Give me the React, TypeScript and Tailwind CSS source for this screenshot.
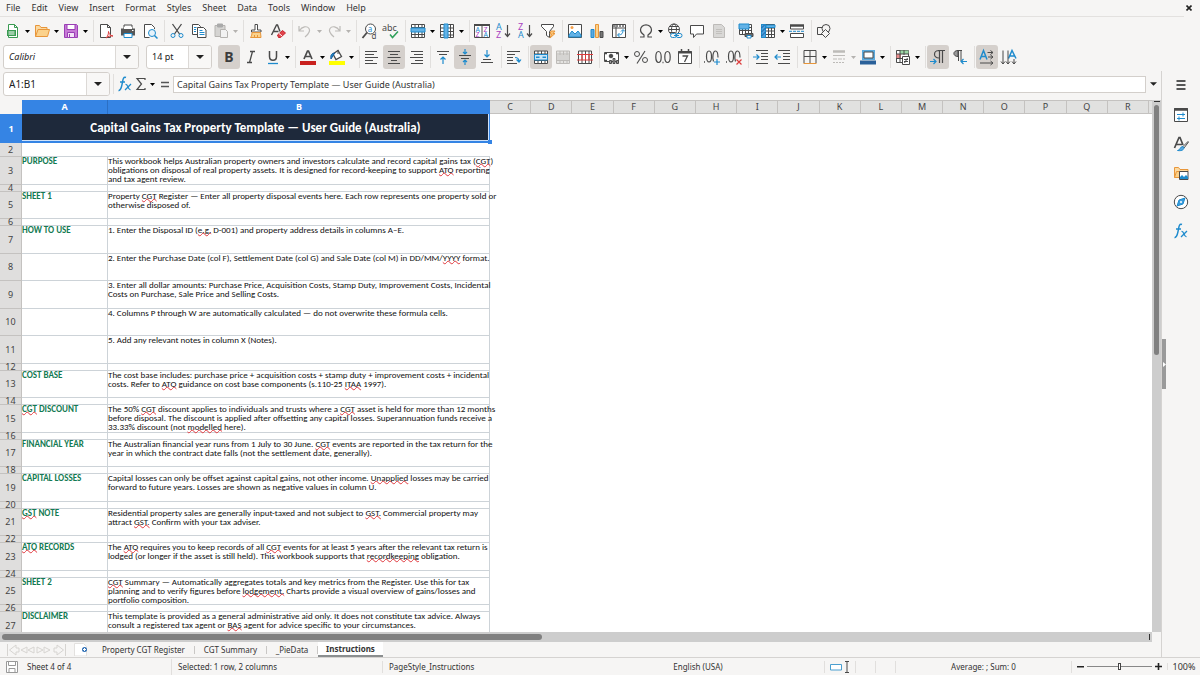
import React from 'react';

const ink = '#4a4a4a';
const blue = '#1e8bcd';

// Toolbar glyphs, all drawn on a 16x16 grid
const icons: Record<string, React.ReactNode> = {
    new: (
        <>
            <path d="M3.5 1.5h6l3 3v10h-9z" fill="#fff" stroke="#3a9b52" />
            <path d="M9.5 1.5v3h3" stroke="#3a9b52" />
            <path d="M2 7h9v6H2z" fill="#3a9b52" stroke="none" />
            <path d="M3.5 9h6M3.5 11h6" stroke="#fff" />
        </>
    ),
    open: (
        <>
            <path d="M1.5 13.5v-11h4l1.5 2h6v2" fill="#fbd9a0" stroke="#e8963a" />
            <path d="M1.5 13.5l2.5-7h11.5l-2 7z" fill="#fbd28c" stroke="#e8963a" />
        </>
    ),
    save: (
        <>
            <path d="M1.5 1.5h12l1 1v12h-13z" fill="#c77ad6" stroke="#9a3fb5" />
            <path d="M4 1.5h8v5H4z" fill="#fff" stroke="#9a3fb5" />
            <path d="M4.5 9.5h7v5h-7z" fill="#f3e3f7" stroke="#9a3fb5" />
            <path d="M6.5 11v3" stroke="#9a3fb5" />
        </>
    ),
    pdf: (
        <>
            <path d="M2.5 1.5h7l3 3v10h-10z" fill="#fff" />
            <path d="M9.5 1.5v3h3" />
            <path d="M8 15c2-2 2.500-4 2.500-6.500.5 2.500 1.500 4 4.500 4.500-3-.5-5 .5-7 2z" stroke="#dc3b3b" fill="#fff" />
        </>
    ),
    print: (
        <>
            <path d="M4 2h8v4H4z" fill="#fff" />
            <path d="M1 5.500h14v7H1z" fill="#565656" stroke="none" />
            <path d="M4 4h8v2H4z" fill="#fff" stroke="none" />
            <path d="M4 10.500h8v4H4z" fill="#fff" stroke={blue} />
            <path d="M12 7.500h1.500" stroke="#fff" />
        </>
    ),
    preview: (
        <>
            <path d="M12.500 6V4.500l-3-3h-7v13h5" fill="#fff" />
            <circle cx="10" cy="10" r="3.500" fill="#e7f3fb" stroke={blue} />
            <path d="M12.500 12.500l3 3" stroke={blue} strokeWidth="1.500" />
        </>
    ),
    cut: (
        <>
            <path d="M3.500 1l7 10M12.500 1l-7 10" strokeWidth="1.300" />
            <circle cx="4" cy="12.500" r="2" stroke={blue} />
            <circle cx="12" cy="12.500" r="2" stroke={blue} />
        </>
    ),
    copy: (
        <>
            <path d="M1.500 1.500h6l2 2v8h-8z" fill="#fff" />
            <path d="M6.500 4.500h6l2.500 2.500v7.500H6.500z" fill="#fff" />
            <path d="M3 4.500h2.500M3 6.500h2M3 8.500h2M8.500 7.500h3M8.500 9.500h5M8.500 11.500h5" stroke={blue} />
        </>
    ),
    paste: (
        <>
            <path d="M2 2.500h10v11H2z" fill="#d5d4d2" stroke="#b5b3b0" />
            <path d="M4.500 1h5v3h-5z" fill="#aaa" stroke="#aaa" />
            <path d="M7.500 6.500h5l2 2v6h-7z" fill="#f2f2f2" stroke="#b5b3b0" />
        </>
    ),
    clone: (
        <>
            <path d="M7 1.500h2.500v5.500H13v2H3.500V7H7z" fill="#fff" />
            <path d="M4 9.500h8.500l.5 5H2.500c1-1.500 1.500-3 1.500-5z" fill="#fbd28c" stroke="#e8963a" />
            <path d="M6.500 12v2.500M9.500 12v2.500" stroke="#e8963a" />
        </>
    ),
    clear: (
        <>
            <path d="M1.500 12L6.500 2h1l2.500 6.500M3.500 8.500h5" strokeWidth="1.400" />
            <path d="M7.500 12l5-4.500 3 2.500-5 4.500H8.500z" fill="#e0434b" stroke="#c9252d" />
            <path d="M9 10.500l3 2.500" stroke="#fff" />
        </>
    ),
    undo: <path d="M2 3v5h5M2.500 7.500C5 3.500 10 2.500 12 5.500s-1 6-4 8.500" stroke="#bdbbb8" strokeWidth="1.200" />,
    redo: <path d="M14 3v5H9M13.500 7.500C11 3.500 6 2.500 4 5.500s1 6 4 8.500" stroke="#bdbbb8" strokeWidth="1.200" />,
    find: (
        <>
            <circle cx="9.500" cy="6" r="5" fill="#fff" />
            <path d="M6 9.500L1.500 15" strokeWidth="1.800" />
            <text x="6.800" y="8.500" fontSize="8" fill={blue} stroke="none">a</text>
            <text x="10.500" y="15.500" fontSize="8" fill={ink} stroke="none">d</text>
        </>
    ),
    spell: (
        <>
            <text x="-1" y="8" fontSize="9" fill={ink} stroke="none">abc</text>
            <path d="M7 11.500l2.500 3 5.500-6" stroke="#2fa05a" strokeWidth="1.500" />
        </>
    ),
    row: (
        <>
            <path d="M1.500 1.500h13v13h-13zM1.500 4.500h13M1.500 11.500h13M5 1v14M8.500 1v14M12 1v14" fill="#fff" />
            <path d="M1 5h14v4H1z" fill="#63b2e6" stroke={blue} />
        </>
    ),
    column: (
        <>
            <path d="M1.500 1.500h13v13h-13zM1 5h14M1 8.500h14M1 12h14M11.500 1v14" fill="#fff" />
            <path d="M5 1h4v14H5z" fill="#63b2e6" stroke={blue} />
        </>
    ),
    sort: (
        <>
            <path d="M.5 1.500h15v13H.5zM8 2v13" fill="#fff" />
            <path d="M0 1h16v2H0z" fill={ink} stroke="none" />
            <text x="1.500" y="8.500" fontSize="7" fill={blue} stroke="none">A</text>
            <text x="1.500" y="14" fontSize="7" fill="#a93fc0" stroke="none">Z</text>
            <text x="9.500" y="8.500" fontSize="7" fill="#a93fc0" stroke="none">Z</text>
            <text x="9.500" y="14" fontSize="7" fill={blue} stroke="none">A</text>
        </>
    ),
    sortAsc: (
        <>
            <text x="0" y="7" fontSize="9" fill={blue} stroke="none">A</text>
            <text x="0" y="15" fontSize="9" fill="#a93fc0" stroke="none">Z</text>
            <path d="M11.500 2v11M9 10.500l2.500 3 2.500-3" strokeWidth="1.200" />
        </>
    ),
    sortDesc: (
        <>
            <text x="0" y="7" fontSize="9" fill="#a93fc0" stroke="none">Z</text>
            <text x="0" y="15" fontSize="9" fill={blue} stroke="none">A</text>
            <path d="M11.500 2v11M9 10.500l2.500 3 2.500-3" strokeWidth="1.200" />
        </>
    ),
    filter: (
        <>
            <path d="M1.500 1.500h12v2l-4 5v6l-3-2v-4l-5-5z" fill="#fff" />
            <path d="M11 8h4l-2 2.500h2L10 15l1.500-4H10z" fill="#fbc477" stroke="#e8963a" />
        </>
    ),
    image: (
        <>
            <path d="M1.500 1.500h13v13h-13z" fill="#fff" />
            <path d="M2 14v-2l3-4 3 3 3-3 3 4v2z" fill="#63b2e6" stroke={blue} />
            <circle cx="5" cy="4.500" r="1.500" fill="#f6a04b" stroke="none" />
        </>
    ),
    chart: (
        <>
            <path d="M2 6.500h3v8H2z" fill="#5da9e0" stroke={blue} />
            <path d="M6.500 1.500h3v13h-3z" fill="#fbd28c" stroke="#e8963a" />
            <path d="M11 8.500h3v6h-3z" fill="#777" />
        </>
    ),
    pivot: (
        <>
            <path d="M1.500 1.500h13v13h-13zM5 1v14M1 5h14" fill="#fff" />
            <path d="M2 3h12" strokeWidth="2" stroke="#8a8a8a" strokeDasharray="2 1" />
            <path d="M7 12c4 0 5-2 5-5M10 8.500L12 6.500l2 2M8.500 10L6.500 12l2 2" stroke={blue} />
        </>
    ),
    omega: <path d="M2 14h4v-2C3.500 10.500 2.500 9 2.500 7c0-3 2.500-5.200 5.500-5.200S13.500 4 13.500 7c0 2-1 3.500-3.500 5v2h4" strokeWidth="1.200" />,
    link: (
        <>
            <circle cx="7" cy="6.500" r="5.500" fill="#fff" />
            <ellipse cx="7" cy="6.500" rx="2.500" ry="5.500" />
            <path d="M1.500 6.500h11M2.500 3.500h9M2.500 9.500h6" />
            <rect x="3.500" y="10.500" width="6" height="4" rx="2" fill="#f6f5f4" stroke={blue} />
            <rect x="9" y="10.500" width="6" height="4" rx="2" stroke={blue} />
            <path d="M7 12.500h5" stroke={blue} />
        </>
    ),
    comment: <path d="M1.500 2.500h13v8.500H7.500l-3 3.500V11h-3z" fill="#fff" />,
    header: (
        <>
            <path d="M2.500 1.500h8l3 3v10h-11z" fill="#d9d8d6" stroke="#bdbbb8" />
            <path d="M5 6.500h6M5 8.500h6M5 10.500h6" stroke="#c2c0bd" />
        </>
    ),
    printArea: (
        <>
            <path d="M1.500 1.500h12v10h-12zM1 4.500h13M1 7.500h13M4.500 1v11M7.500 1v11M10.500 1v11" fill="#fff" />
            <path d="M1 1h10v5H1z" fill="#63b2e6" stroke={blue} />
            <path d="M7 10.500h8v3H7z" fill="#666" />
            <path d="M9 12.500h4v2.500H9z" fill="#fff" stroke={blue} />
        </>
    ),
    freeze: (
        <>
            <path d="M1.500 1.500h13v13h-13zM1 5h14M1 8h14M1 11.500h14M8.500 1v14M11.500 1v14" fill="#fff" />
            <path d="M1.500 1.500h4v13h-4z" fill="#4c9fdc" stroke={blue} />
            <path d="M6 2h9v2.500H6z" fill="#63b2e6" stroke={blue} />
            <path d="M1.500 5l3-3M1.500 9l4-4M1.500 13l4-4" stroke="#1a5f9e" />
        </>
    ),
    split: (
        <>
            <path d="M1.500 2v4h13V2M1.500 14.500v-4h13v4z" fill="#fff" />
            <path d="M1 2.500h14" strokeWidth="2.500" />
            <path d="M0 8.300h16" stroke={blue} strokeDasharray="3 1" />
        </>
    ),
    shapes: (
        <>
            <path d="M1.500 4.500h7v7h-7z" />
            <circle cx="10" cy="5.500" r="4" fill="#f6f5f4" />
            <path d="M9.500 6.500l4 4-4 4-4-4z" fill="#f6f5f4" />
        </>
    ),
    italic: <path d="M7 2.500h5M4 13.500h5M9.500 2.500l-3 11" strokeWidth="1.300" />,
    underline: (
        <>
            <path d="M4.500 2v5.500c0 5 7 5 7 0V2" strokeWidth="1.500" />
            <path d="M3 14.500h10" stroke={blue} strokeWidth="1.300" />
        </>
    ),
    fontColor: (
        <>
            <path d="M4 10L7.500 2h1L12 10M5.200 7.500h5.600" strokeWidth="1.700" />
            <path d="M0 12h16v4H0z" fill="#c9211e" stroke="none" />
        </>
    ),
    highlight: (
        <>
            <path d="M4 5l5-3.500 3.500 6-5.500 3z" fill="#fff" strokeWidth="1.300" />
            <path d="M9 1v4" />
            <path d="M2 10c-1-4 1-6 4-6-1.500 1.500-2 3-4 6z" fill={blue} stroke="#1a5f9e" />
            <path d="M0 12h16v4H0z" fill="#ffff00" stroke="none" />
        </>
    ),
    left: <path d="M1 2.500h12M1 5.500h9M1 8.500h13M1 11.500h8M1 14.500h12" />,
    center: <path d="M2 2.500h12M4 5.500h8M1.500 8.500h13M5 11.500h6M2 14.500h12" />,
    right: <path d="M3 2.500h12M6 5.500h9M2 8.500h13M7 11.500h8M3 14.500h12" />,
    top: (
        <>
            <path d="M2 2.500h12M4 5.500h8" />
            <path d="M8 15V8M5.500 10.500L8 8l2.500 2.500" stroke={blue} strokeWidth="1.200" />
        </>
    ),
    middle: (
        <>
            <path d="M2 6.500h12M4 9.500h8" />
            <path d="M8 0v5M6 3l2 2 2-2M8 16v-5M6 13l2-2 2 2" stroke={blue} strokeWidth="1.200" />
        </>
    ),
    bottom: (
        <>
            <path d="M2 13.500h12M4 10.500h8" />
            <path d="M8 1v7M5.500 5.500L8 8l2.500-2.500" stroke={blue} strokeWidth="1.200" />
        </>
    ),
    wrap: (
        <>
            <path d="M1 2.500h13M1 5.500h8M1 8.500h6M1 11.500h6M1 14.500h10" />
            <path d="M9 8.500c3 0 4 1.500 4 4M10.500 10.500l2.500 2.500 2-2.500" stroke={blue} strokeWidth="1.200" />
        </>
    ),
    merge: (
        <>
            <path d="M1.500 2h13v12.500h-13zM1 5h14M1 11.500h14M5 2v13M8.500 2v13M12 2v13" fill="#fff" />
            <path d="M1.500 5.500h13v5.500h-13z" fill="#cde6f7" stroke={blue} />
            <path d="M3 8.300h3.500M9.500 8.300H13" stroke={blue} strokeWidth="1.500" />
        </>
    ),
    unmerge: (
        <>
            <path d="M1.500 2h13v12.500h-13zM1 5h14M1 11.500h14M5 2v13M8.500 2v13M12 2v13" fill="#e4e3e1" stroke="#bdbbb8" />
            <path d="M2 6h12v5H2z" fill="#d5d4d2" stroke="none" />
        </>
    ),
    split2: (
        <>
            <path d="M1.500 2h13v12.500h-13zM5 2v13M8.500 2v13M12 2v13" fill="#fff" />
            <path d="M0 5.500h16M0 11h16M5 5.500V11M8.500 5.500V11M12 5.500V11" stroke="#dc3b3b" />
        </>
    ),
    currency: (
        <>
            <path d="M.5 3.500h14v9H.5z" fill="#fff" />
            <circle cx="7" cy="7" r="1.800" fill={ink} />
            <path d="M1 4.500h2M12 4.500h2M1 11.500h2" strokeWidth="1.500" />
            <path d="M5.500 11.500h2v3h-2zM9 9.500h2v5H9zM12.500 11.500h2v3h-2z" fill="#999" />
        </>
    ),
    percent: (
        <>
            <circle cx="4" cy="5" r="2.500" />
            <circle cx="12" cy="11" r="2.500" />
            <path d="M12 2L4 14.500" strokeWidth="1.100" />
        </>
    ),
    number: (
        <>
            <ellipse cx="3.500" cy="8" rx="2.700" ry="5.500" strokeWidth="1.200" />
            <ellipse cx="12.500" cy="8" rx="2.700" ry="5.500" strokeWidth="1.200" />
            <path d="M7.500 13.500h1" strokeWidth="1.500" />
        </>
    ),
    date: (
        <>
            <path d="M1.500 2.500h13v12h-13z" fill="#fff" />
            <path d="M1 3.500h14" strokeWidth="2" />
            <path d="M4.500 0v3M11.500 0v3" strokeWidth="1.500" />
            <path d="M5.500 7h5l-3 6" strokeWidth="1.300" />
        </>
    ),
    addDecimal: (
        <>
            <path d="M0 13h1" strokeWidth="1.500" />
            <ellipse cx="5" cy="7.500" rx="2.500" ry="5.500" strokeWidth="1.200" />
            <path d="M9.500 12.500C8 9 9 2 11.500 2S14 6 14 8.500" strokeWidth="1.200" />
            <path d="M13 10v6M10 13h6" stroke={blue} strokeWidth="1.200" />
        </>
    ),
    delDecimal: (
        <>
            <path d="M0 13h1" strokeWidth="1.500" />
            <ellipse cx="5" cy="7.500" rx="2.500" ry="5.500" strokeWidth="1.200" />
            <path d="M9.500 12.500C8 9 9 2 11.500 2S14 6 14 8.500" strokeWidth="1.200" />
            <path d="M10.500 10.500l5 5M15.500 10.500l-5 5" stroke="#dc3b3b" strokeWidth="1.200" />
        </>
    ),
    indent: (
        <>
            <path d="M3 1.500h12M8 4.500h7M8 7.500h7M8 10.500h7M3 14.500h12" />
            <path d="M0 8h6M3.500 5.500L6 8l-2.500 2.500" stroke={blue} strokeWidth="1.200" />
        </>
    ),
    outdent: (
        <>
            <path d="M3 1.500h12M8 4.500h7M8 7.500h7M8 10.500h7M3 14.500h12" />
            <path d="M0 8h6M2.500 5.500L0 8l2.500 2.500" stroke={blue} strokeWidth="1.200" />
        </>
    ),
    borders: (
        <>
            <path d="M2 14V1.500h12V14M2 7.500h12M8 1.500v13" />
            <path d="M1.500 14.500h13" stroke="#e8963a" />
        </>
    ),
    borderStyle: (
        <>
            <path d="M2 2.500h12" stroke="#bdbbb8" strokeWidth="2.500" />
            <path d="M2 6.500h12" stroke="#bdbbb8" />
            <path d="M2 10h12" stroke="#bdbbb8" strokeDasharray="4 1" />
            <path d="M2 13.500h12" stroke="#bdbbb8" strokeDasharray="2 1" />
        </>
    ),
    borderColor: (
        <>
            <path d="M3 2h11v8H3z" fill="#fff" stroke="#5aa9dc" strokeWidth="2" />
            <path d="M4 3h9v6H4z" />
            <path d="M0 11.500h16v4H0z" fill="#2a6099" stroke="none" />
        </>
    ),
    conditional: (
        <>
            <path d="M1.500 1.500h12v12h-12z" fill="#fff" />
            <path d="M5 1.500h8.500V5H5z" fill="#9bd7a5" stroke="none" />
            <path d="M1.500 5H6v5H1.500z" fill="#e98b8b" stroke="none" />
            <path d="M1 5h13M1 9.500h6M5 1v13M9 1v5" />
            <path d="M7.500 7.500h7v8h-7z" fill="#fff" />
            <path d="M9 10.500h4M9 12.500h4M12.500 9l-3 5" />
        </>
    ),
    ltr: (
        <>
            <path d="M8 1.500h7M9.500 1.500V14M12.500 1.500V14M9 9C3 9 3 1.500 9 1.500" strokeWidth="1.200" />
            <path d="M0 12.500h6M3.500 10L6 12.500 3.500 15" stroke={blue} strokeWidth="1.200" />
        </>
    ),
    rtl: (
        <>
            <path d="M5 1.500h5M6.500 1.500V12M9 1.500V12" />
            <path d="M6 7.500C.5 7.500.5 1.500 6 1.500z" fill="#999" />
            <path d="M9 12.500h6M11.500 10L9 12.500l2.500 2.500" stroke={blue} strokeWidth="1.200" />
        </>
    ),
    textHorizontal: (
        <>
            <path d="M1 10.500L4.500 1.500 8 10.500M2.500 7.500h4" stroke={blue} strokeWidth="1.500" />
            <path d="M8.500 3.500h5.500M11.500 1.500l2.500 2-2.500 2M9 8h5M11.500 6l2.500 2-2.500 2M1 14h13M11.500 12l2.500 2-2.500 2" />
        </>
    ),
    textVertical: (
        <>
            <path d="M7.500 9.500L11 1.500l4 8M9 7h4.500" stroke={blue} strokeWidth="1.500" />
            <path d="M2 1.500V15M0 12.500L2 15l2-2.500M7 1.500V15M5 12.500L7 15l2-2.500M13 10v5M11 12.500l2 2.500 2-2.500" />
        </>
    ),
    menu: <path d="M3.500 4h9M3.500 8h9M3.500 12h9" stroke="#222" strokeWidth="1.400" />,
    properties: (
        <>
            <path d="M1.500 1.500h13v13h-13z" fill="#fff" />
            <path d="M1 2.500h14" strokeWidth="2.500" />
            <path d="M4 7.500h8M4 11.500h8M10 5.500v4M6 9.500v4" stroke={blue} />
        </>
    ),
    styles: (
        <>
            <path d="M1.500 12L6 1.500h1L10 9M3 8.500h6" strokeWidth="1.700" />
            <path d="M15 5.500l-5 5 1 1.500 4.500-6z" fill="#fff" />
            <path d="M4.500 14.500c3 0 2-4 5.500-4 2 1 1 5-5.500 4z" fill="#5da9e0" stroke={blue} />
        </>
    ),
    gallery: (
        <>
            <path d="M1.500 12.500v-10h4l1.500 2h8v2" fill="#fbd9a0" stroke="#e8963a" />
            <path d="M1.500 12.500l2-6h11v6z" fill="#fbd28c" stroke="#e8963a" />
            <path d="M6.500 6.500h8.500v8H6.500z" fill="#fff" />
            <path d="M7 14v-2l2-2 2 2 2-2 2 2v2z" fill={blue} stroke="none" />
        </>
    ),
    navigator: (
        <>
            <circle cx="8" cy="8" r="6.700" fill="#fff" />
            <path d="M12 4l-2 6-6 2 2-6z" fill="#3c9ddd" stroke={blue} />
            <circle cx="8" cy="8" r="1" fill="#fff" stroke="none" />
        </>
    ),
    functions: (
        <>
            <path d="M9 1.500C6.500.5 6 3 5.500 6S4 15 1.500 14.500M3 6h5" stroke={blue} strokeWidth="1.500" />
            <path d="M8.500 8.500c2.500-1 2.500 6 5 5M14 8l-6 6" stroke={blue} strokeWidth="1.300" />
        </>
    ),
    sum: <path d="M12 4V2.500H4L8.500 8 4 13.500h8V12" strokeWidth="1.200" />,
    equals: <path d="M4 6.500h8M4 10.500h8" stroke="#555" strokeWidth="1.600" />,
    disk: (
        <>
            <path d="M2.500 2.500h11v11h-11z" fill="#fff" stroke="#999" />
            <path d="M4.500 2.500h7v4h-7zM5 9.500h6v4H5z" stroke="#999" />
        </>
    ),
};

function Icon({ name }: { name: string }) {
    return (
        <svg className="size-4 shrink-0 overflow-visible font-['Noto_Sans',sans-serif]" viewBox="0 0 16 16" fill="none" stroke={ink} aria-hidden="true">
            {icons[name]}
        </svg>
    );
}

function Caret({ className = '' }: { className?: string }) {
    return (
        <svg className={className} width="5" height="3" viewBox="0 0 5 3" fill="currentColor" aria-hidden="true">
            <path d="M0 0h5L2.500 3z" />
        </svg>
    );
}

type Tool = { icon: string; label: string; on?: boolean; menu?: boolean; dim?: boolean };

const standardBar: Tool[][] = [
    [
        { icon: 'new', label: 'New', menu: true },
        { icon: 'open', label: 'Open', menu: true },
        { icon: 'save', label: 'Save', menu: true },
    ],
    [
        { icon: 'pdf', label: 'Export as PDF' },
        { icon: 'print', label: 'Print' },
        { icon: 'preview', label: 'Print Preview' },
    ],
    [
        { icon: 'cut', label: 'Cut' },
        { icon: 'copy', label: 'Copy' },
        { icon: 'paste', label: 'Paste', menu: true, dim: true },
    ],
    [
        { icon: 'clone', label: 'Clone Formatting' },
        { icon: 'clear', label: 'Clear Formatting' },
    ],
    [
        { icon: 'undo', label: 'Undo', menu: true, dim: true },
        { icon: 'redo', label: 'Redo', menu: true, dim: true },
    ],
    [
        { icon: 'find', label: 'Find and Replace' },
        { icon: 'spell', label: 'Spelling' },
    ],
    [
        { icon: 'row', label: 'Row', menu: true },
        { icon: 'column', label: 'Column', menu: true },
    ],
    [
        { icon: 'sort', label: 'Sort' },
        { icon: 'sortAsc', label: 'Sort Ascending' },
        { icon: 'sortDesc', label: 'Sort Descending' },
        { icon: 'filter', label: 'AutoFilter' },
    ],
    [
        { icon: 'image', label: 'Insert Image' },
        { icon: 'chart', label: 'Insert Chart' },
        { icon: 'pivot', label: 'Insert Pivot Table' },
    ],
    [
        { icon: 'omega', label: 'Special Character', menu: true },
        { icon: 'link', label: 'Insert Hyperlink' },
        { icon: 'comment', label: 'Insert Comment' },
        { icon: 'header', label: 'Headers and Footers', dim: true },
    ],
    [
        { icon: 'printArea', label: 'Define Print Area' },
        { icon: 'freeze', label: 'Freeze Rows and Columns', menu: true },
        { icon: 'split', label: 'Split Window' },
    ],
    [{ icon: 'shapes', label: 'Show Draw Functions' }],
];

const formatBar: Tool[][] = [
    [
        { icon: 'bold', label: 'Bold', on: true },
        { icon: 'italic', label: 'Italic' },
        { icon: 'underline', label: 'Underline', menu: true },
    ],
    [
        { icon: 'fontColor', label: 'Font Color', menu: true },
        { icon: 'highlight', label: 'Background Color', menu: true },
    ],
    [
        { icon: 'left', label: 'Align Left' },
        { icon: 'center', label: 'Center Horizontally', on: true },
        { icon: 'right', label: 'Align Right' },
    ],
    [
        { icon: 'top', label: 'Align Top' },
        { icon: 'middle', label: 'Center Vertically', on: true },
        { icon: 'bottom', label: 'Align Bottom' },
    ],
    [{ icon: 'wrap', label: 'Wrap Text' }],
    [
        { icon: 'merge', label: 'Merge and Center', on: true },
        { icon: 'unmerge', label: 'Merge Cells', dim: true },
        { icon: 'split2', label: 'Unmerge Cells' },
    ],
    [
        { icon: 'currency', label: 'Format as Currency', menu: true },
        { icon: 'percent', label: 'Format as Percent' },
        { icon: 'number', label: 'Format as Number' },
        { icon: 'date', label: 'Format as Date' },
    ],
    [
        { icon: 'addDecimal', label: 'Add Decimal Place' },
        { icon: 'delDecimal', label: 'Delete Decimal Place' },
    ],
    [
        { icon: 'indent', label: 'Increase Indent' },
        { icon: 'outdent', label: 'Decrease Indent' },
    ],
    [
        { icon: 'borders', label: 'Borders', menu: true },
        { icon: 'borderStyle', label: 'Border Style', menu: true, dim: true },
        { icon: 'borderColor', label: 'Border Color', menu: true },
    ],
    [{ icon: 'conditional', label: 'Conditional Formatting', menu: true }],
    [
        { icon: 'ltr', label: 'Left-To-Right', on: true },
        { icon: 'rtl', label: 'Right-To-Left' },
    ],
    [
        { icon: 'textHorizontal', label: 'Text direction from left to right', on: true },
        { icon: 'textVertical', label: 'Text direction from top to bottom' },
    ],
];

function ToolGroups({ groups }: { groups: Tool[][] }) {
    return (
        <>
            {groups.map((group, g) => (
                <React.Fragment key={g}>
                    {g > 0 && (
                        <span className={`mr-px h-[22px] w-px bg-[#e1dfdd] ${groups[g - 1][groups[g - 1].length - 1].menu ? 'ml-1' : 'ml-[3px]'}`} />
                    )}
                    {group.map((tool) => (
                        <React.Fragment key={tool.icon}>
                            <button
                                aria-label={tool.label}
                                className={`flex h-6 w-[22px] items-center justify-center rounded-[3px] ${tool.on ? 'bg-[#d5d0cc]' : ''}`}
                            >
                                {tool.icon === 'bold' ? <b className="text-sm leading-4 text-[#3c3c3c]">B</b> : <Icon name={tool.icon} />}
                            </button>
                            {tool.menu && (
                                <button aria-label={`${tool.label} options`} className={`flex h-6 w-[7px] items-center justify-center ${tool.dim ? 'text-[#b5b3b0]' : 'text-black'}`}>
                                    <Caret />
                                </button>
                            )}
                        </React.Fragment>
                    ))}
                </React.Fragment>
            ))}
        </>
    );
}

function Combo({ label, value, width, text = 'text-[9px]' }: { label: string; value: string; width: string; text?: string }) {
    return (
        <div className={`flex h-6 shrink-0 overflow-hidden rounded-[3px] border border-[#d3cfcb] bg-white ${width}`}>
            <input aria-label={label} defaultValue={value} className={`min-w-0 flex-1 px-[5px] text-[#222] outline-none ${text}`} />
            <button aria-label={`${label} list`} className="flex w-[23px] items-center justify-center border-l border-[#dcd9d6] bg-[#f8f7f6] text-[#222]">
                <svg width="8" height="4" viewBox="0 0 8 4" fill="currentColor" aria-hidden="true"><path d="M0 0h8L4 4z" /></svg>
            </button>
        </div>
    );
}

type Row = { h: string; label?: string; text?: string };

// Words in [brackets] are flagged by the spell checker
const rows: Row[] = [
    { h: 'h-[28px]', label: 'PURPOSE', text: 'This workbook helps Australian property owners and investors calculate and record capital gains tax ([CGT])\nobligations on disposal of real property assets. It is designed for record-keeping to support [ATO] reporting\nand tax agent review.' },
    { h: 'h-[7px]' },
    { h: 'h-[27px]', label: 'SHEET 1', text: 'Property [CGT] Register — Enter all property disposal events here. Each row represents one property sold or\notherwise disposed of.' },
    { h: 'h-[7px]' },
    { h: 'h-[28px]', label: 'HOW TO USE', text: '1. Enter the Disposal ID ([e.g.] D-001) and property address details in columns A–E.' },
    { h: 'h-[27px]', text: '2. Enter the Purchase Date (col F), Settlement Date (col G) and Sale Date (col M) in DD/MM/[YYYY] format.' },
    { h: 'h-[28px]', text: '3. Enter all dollar amounts: Purchase Price, Acquisition Costs, Stamp Duty, Improvement Costs, Incidental\nCosts on Purchase, Sale Price and Selling Costs.' },
    { h: 'h-[27px]', text: '4. Columns P through W are automatically calculated — do not overwrite these formula cells.' },
    { h: 'h-[28px]', text: '5. Add any relevant notes in column X (Notes).' },
    { h: 'h-[7px]' },
    { h: 'h-[27px]', label: 'COST BASE', text: 'The cost base includes: purchase price + acquisition costs + stamp duty + improvement costs + incidental\ncosts. Refer to [ATO] guidance on cost base components (s.110-25 [ITAA] 1997).' },
    { h: 'h-[7px]' },
    { h: 'h-[28px]', label: '[CGT] DISCOUNT', text: 'The 50% [CGT] discount applies to individuals and trusts where a [CGT] asset is held for more than 12 months\nbefore disposal. The discount is applied after offsetting any capital losses. Superannuation funds receive a\n33.33% discount (not [modelled] here).' },
    { h: 'h-[7px]' },
    { h: 'h-[27px]', label: 'FINANCIAL YEAR', text: 'The Australian financial year runs from 1 July to 30 June. [CGT] events are reported in the tax return for the\nyear in which the contract date falls (not the settlement date, generally).' },
    { h: 'h-[7px]' },
    { h: 'h-[28px]', label: 'CAPITAL LOSSES', text: 'Capital losses can only be offset against capital gains, not other income. [Unapplied] losses may be carried\nforward to future years. Losses are shown as negative values in column U.' },
    { h: 'h-[7px]' },
    { h: 'h-[27px]', label: '[GST] NOTE', text: 'Residential property sales are generally input-taxed and not subject to [GST.] Commercial property may\nattract [GST.] Confirm with your tax adviser.' },
    { h: 'h-[7px]' },
    { h: 'h-[28px]', label: '[ATO] RECORDS', text: 'The [ATO] requires you to keep records of all [CGT] events for at least 5 years after the relevant tax return is\nlodged (or longer if the asset is still held). This workbook supports that [recordkeeping] obligation.' },
    { h: 'h-[7px]' },
    { h: 'h-[27px]', label: 'SHEET 2', text: '[CGT] Summary — Automatically aggregates totals and key metrics from the Register. Use this for tax\nplanning and to verify figures before [lodgement.] Charts provide a visual overview of gains/losses and\nportfolio composition.' },
    { h: 'h-[7px]' },
    { h: 'h-[28px]', label: 'DISCLAIMER', text: 'This template is provided as a general administrative aid only. It does not constitute tax advice. Always\nconsult a registered tax agent or [BAS] agent for advice specific to your circumstances.' },
];

function Checked({ text }: { text: string }) {
    return (
        <>
            {text.split(/[[\]]/).map((part, i) =>
                i % 2 ? (
                    <span key={i} className="inline-block underline decoration-[#e0393e] decoration-wavy decoration-1 [text-decoration-skip-ink:none] [text-underline-offset:-1px]">{part}</span>
                ) : (
                    part
                )
            )}
        </>
    );
}

const columns = 'CDEFGHIJKLMNOPQR'.split('');
const rowHead = 'border-r border-b border-[#c4c2c0] bg-[#dfdedd] p-0 text-center align-middle text-[9px] leading-[6px] font-normal text-[#444]';
const cellText = "-mt-px h-px font-['Carlito','Lato',sans-serif] text-[9px] leading-[9px] whitespace-pre";

function Sheet() {
    return (
        <table className="w-full table-fixed border-separate border-spacing-0">
            <colgroup>
                <col className="w-[22px]" />
                <col className="w-[86px]" />
                <col className="w-[382px]" />
                {columns.map((c) => (
                    <col key={c} />
                ))}
                <col className="w-[3px]" />
            </colgroup>
            <thead>
                <tr className="h-[14px] text-[9px] leading-3">
                    <th className="bg-[#f6f5f4] p-0" />
                    <th className="border-r border-[#2b6fc4] bg-[#3584e4] p-0 font-bold text-white">A</th>
                    <th className="bg-[#3584e4] p-0 font-bold text-white">B</th>
                    {columns.map((c) => (
                        <th key={c} className="border-t border-r border-b border-[#c4c2c0] bg-[#e1e1e0] p-0 font-normal text-[#444]">{c}</th>
                    ))}
                    <th className="border-y border-[#c4c2c0] bg-[#e1e1e0] p-0" />
                </tr>
            </thead>
            <tbody>
                <tr className="h-[29px]">
                    <th className="bg-[#3584e4] p-0 text-[9px] font-bold text-white">1</th>
                    <td colSpan={2} className="relative border-b-2 border-r border-[#3584e4] bg-[#1e293b] p-0 text-center font-['Carlito','Lato',sans-serif] text-[13px] leading-4 font-bold text-white shadow-[inset_-1px_-1px_0_#cfe2fa]">
                        Capital Gains Tax Property Template — User Guide (Australia)
                        <span className="absolute -right-[3px] -bottom-[3px] size-1 bg-[#3584e4]" />
                    </td>
                    <td colSpan={17} />
                </tr>
                <tr className="h-[14px]">
                    <th className={rowHead}>2</th>
                    <td colSpan={2} className="border-b border-[#cdd3d8] p-0" />
                    <td colSpan={17} />
                </tr>
                {rows.map((row, i) => (
                    <tr key={i} className={row.h}>
                        <th className={rowHead}>{i + 3}</th>
                        <td className="border-r border-b border-[#cdd3d8] p-0 align-top">
                            <div className={`${cellText} font-bold text-[#137a52]`}>
                                <Checked text={row.label ?? ''} />
                            </div>
                        </td>
                        <td className="border-r border-b border-[#cdd3d8] p-0 align-top">
                            <div className={`${cellText} text-[#111]`}>
                                <Checked text={row.text ?? ''} />
                            </div>
                        </td>
                        <td colSpan={17} />
                    </tr>
                ))}
            </tbody>
        </table>
    );
}

const menus = ['File', 'Edit', 'View', 'Insert', 'Format', 'Styles', 'Sheet', 'Data', 'Tools', 'Window', 'Help'];
const tabs = [
    { name: 'Property CGT Register', width: 'w-[92px] text-left' },
    { name: 'CGT Summary', width: 'w-[71px]' },
    { name: '_PieData', width: 'w-[50px]' },
];
const panels = [
    { icon: 'properties', label: 'Properties' },
    { icon: 'styles', label: 'Styles' },
    { icon: 'gallery', label: 'Gallery' },
    { icon: 'navigator', label: 'Navigator' },
    { icon: 'functions', label: 'Functions' },
];

export default function App() {
    return (
        <div className="flex h-screen flex-col overflow-hidden bg-[#f6f5f4] font-['Noto_Sans',sans-serif] text-[9px] text-[#333]">
            <nav className="mr-4 flex h-[17px] shrink-0 items-center gap-[11px] border-b border-[#e3e1df] pl-1.5">
                {menus.map((m) => (
                    <button key={m} className="leading-4">{m}</button>
                ))}
                <button aria-label="Close document" className="-mr-2 ml-auto">
                    <svg width="6" height="6" viewBox="0 0 6 6" stroke="#222" strokeWidth="1.600" aria-hidden="true"><path d="M.5.5l5 5M5.500.5l-5 5" /></svg>
                </button>
            </nav>

            <div className="flex h-7 shrink-0 items-center pl-0.5">
                <ToolGroups groups={standardBar} />
            </div>
            <div className="mb-0.5 flex h-6 shrink-0 items-center pl-[3px]">
                <Combo label="Font Name" value="Calibri" width="w-[136px]" text="text-[9px] italic" />
                <span className="w-[7px]" />
                <Combo label="Font Size" value="14 pt" width="w-[66px]" />
                <span className="w-1.5" />
                <ToolGroups groups={formatBar} />
            </div>

            <div className="flex min-h-0 flex-1">
                <div className="flex min-w-0 flex-1 flex-col">
                    <div className="flex h-[29px] shrink-0 items-center pb-[3px] pl-[3px]">
                        <Combo label="Name Box" value="A1:B1" width="w-[107px]" text="text-[10px]" />
                        <span className="mx-[3px] h-5 w-px bg-[#e1dfdd]" />
                        <button aria-label="Function Wizard"><Icon name="functions" /></button>
                        <button aria-label="Select Function" className="flex items-center gap-px">
                            <Icon name="sum" />
                            <Caret className="text-black" />
                        </button>
                        <button aria-label="Formula" className="ml-0.5"><Icon name="equals" /></button>
                        <input
                            aria-label="Input line"
                            defaultValue="Capital Gains Tax Property Template — User Guide (Australia)"
                            className="h-[17px] min-w-0 flex-1 border border-[#d3cfcb] bg-white px-[3px] outline-none"
                        />
                        <button aria-label="Expand Formula Bar" className="flex w-[15px] justify-center text-[#222]">
                            <svg width="7" height="4" viewBox="0 0 8 4" fill="currentColor" aria-hidden="true"><path d="M0 0h8L4 4z" /></svg>
                        </button>
                    </div>

                    <div className="flex min-h-0 flex-1">
                        <div className="min-w-0 flex-1 overflow-hidden bg-white">
                            <Sheet />
                        </div>
                        <div className="flex w-[9px] shrink-0 flex-col items-center bg-[#cdcdcd]">
                            <span className="mt-px h-px w-1.5 bg-[#333]" />
                            <span className="mt-[3px] h-[47%] w-[5px] rounded-full bg-[#808080]" />
                        </div>
                    </div>
                    <div className="mr-[9px] flex h-2.5 shrink-0 items-center justify-between bg-[#cdcdcd] px-0.5">
                        <span className="h-1.5 w-[47%] rounded-full bg-[#808080]" />
                        <span className="h-1.5 w-px bg-[#333]" />
                    </div>

                    <div className="flex h-[15px] shrink-0 items-center text-[8px] whitespace-nowrap">
                        <div className="flex w-[67px] items-center justify-end text-[#d6d4d1]">
                            <svg width="61" height="12" viewBox="0 0 61 12" fill="none" stroke="currentColor" aria-hidden="true">
                                <path d="M1.500 0v12M10 1L3.500 6l6.500 5V8h3V4h-3zM21 3l-6 3 6 3zM28 3l-6 3 6 3zM31 3l6 3-6 3zM38 3l6 3-6 3zM51 1l6.500 5-6.500 5V8h-3V4h3zM59.500 0v12" />
                            </svg>
                        </div>
                        <button aria-label="Add Sheet" className="mr-[13px] ml-[7px]">
                            <svg width="15" height="13" viewBox="0 0 15 13" aria-hidden="true">
                                <path d="M.5.5h9l3 3V13H.5z" fill="#fff" stroke="#e3e1df" />
                                <circle cx="10.500" cy="6.500" r="2.500" fill="#2f6fb5" />
                                <path d="M10.500 5v3M9 6.500h3" stroke="#fff" />
                            </svg>
                        </button>
                        {tabs.map((tab) => (
                            <React.Fragment key={tab.name}>
                                <button className={tab.width}>{tab.name}</button>
                                <span className="h-2 w-px bg-[#c9c7c5]" />
                            </React.Fragment>
                        ))}
                        <button className="h-full w-[65px] border-b-2 border-[#8b8e8f] bg-white font-bold">Instructions</button>
                    </div>
                </div>

                <aside className="relative flex w-[39px] shrink-0 flex-col items-center gap-[13px] border-l border-[#d5d3d1] pt-1.5">
                    <button aria-label="Sidebar Settings" className="mb-px"><Icon name="menu" /></button>
                    {panels.map((p) => (
                        <button key={p.icon} aria-label={p.label}><Icon name={p.icon} /></button>
                    ))}
                    <button aria-label="Hide sidebar" className="absolute top-[268px] left-0 flex h-[50px] w-1 items-center justify-center bg-[#9a9a9a]">
                        <svg width="3" height="5" viewBox="0 0 3 5" fill="#fff" aria-hidden="true"><path d="M0 0v5l3-2.500z" /></svg>
                    </button>
                </aside>
            </div>

            <footer className="flex h-[18px] shrink-0 items-center border-t border-[#d5d3d1] text-[8px] leading-3 whitespace-nowrap">
                <div className="flex w-[172px] items-center gap-[7px] border-r border-[#e1dfdd] pl-1">
                    <Icon name="disk" />
                    Sheet 4 of 4
                </div>
                <div className="w-[211px] border-r border-[#e1dfdd] pl-1.5">Selected: 1 row, 2 columns</div>
                <div className="w-[189px] pl-1.5">PageStyle_Instructions</div>
                <div className="flex-1 border-r border-[#e1dfdd] text-center">English (USA)</div>
                <div className="flex w-[31px] items-center justify-center border-r border-[#e1dfdd]">
                    <svg width="20" height="12" viewBox="0 0 20 12" fill="none" aria-hidden="true">
                        <path d="M.5 3.500h11v5.500H.5z" stroke="#4a9fd0" fill="#fff" />
                        <path d="M15 .5h4M15 11.500h4M17 .5v11" stroke={ink} />
                    </svg>
                </div>
                <div className="h-3 w-5 border-r border-[#e1dfdd]" />
                <div className="h-3 w-5 border-r border-[#e1dfdd]" />
                <div className="w-[176px] border-r border-[#e1dfdd] text-center">Average: ; Sum: 0</div>
                <div className="flex w-[96px] items-center justify-center gap-[3px] border-r border-[#e1dfdd]">
                    <button aria-label="Zoom out">
                        <svg width="7" height="7" aria-hidden="true"><path d="M0 3h7v1.500H0z" fill="#222" /></svg>
                    </button>
                    <input
                        type="range"
                        aria-label="Zoom"
                        defaultValue={50}
                        className="h-px w-[65px] appearance-none bg-[#888] [&::-webkit-slider-thumb]:h-[7px] [&::-webkit-slider-thumb]:w-[3px] [&::-webkit-slider-thumb]:appearance-none [&::-webkit-slider-thumb]:border [&::-webkit-slider-thumb]:border-[#444] [&::-webkit-slider-thumb]:bg-white"
                    />
                    <button aria-label="Zoom in">
                        <svg width="7" height="7" viewBox="0 0 7 7" stroke="#222" strokeWidth="1.600" aria-hidden="true"><path d="M0 3.500h7M3.500 0v7" /></svg>
                    </button>
                </div>
                <div className="w-8 text-center text-[9px]">100%</div>
            </footer>
        </div>
    );
}
